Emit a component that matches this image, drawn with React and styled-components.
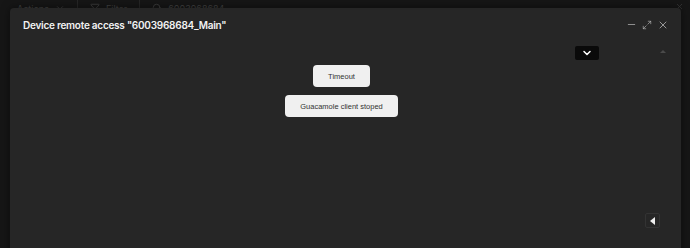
import React from 'react';
import styled, { createGlobalStyle } from 'styled-components';
import { ChevronDown, Filter, Search, Minus, Maximize2, X } from 'lucide-react';

const Global = createGlobalStyle`
    html, body {
        margin: 0;
        padding: 0;
        background: #161616;
        font-family: Inter, "Noto Sans", Arial, sans-serif;
        overflow: hidden;
    }
    #root {
        width: 690px;
        height: 248px;
        position: relative;
        overflow: hidden;
    }
`

const Toolbar = styled.div`
    display: flex;
    align-items: center;
    height: 16px;
    padding: 0 0 0 17px;
    margin-top: 0;
    color: #404040;
    font-size: 9px;
    gap: 12px;
`
const ToolItem = styled.div`
    display: flex;
    align-items: center;
    gap: 6px;
    padding-right: 12px;
    border-right: ${p => p.$sep ? '1px solid #262626' : 'none'};
    height: 16px;
`
const BackClose = styled.div`
    position: absolute;
    top: 2px;
    right: 6px;
    color: #3a3a3a;
    display: flex;
`

const Modal = styled.div`
    position: absolute;
    left: 10px;
    top: 8px;
    width: 671px;
    height: 260px;
    background: #262626;
    border-radius: 4px;
    display: flex;
    flex-direction: column;
    box-shadow: 0 0 8px rgba(0,0,0,0.5);
`
const Header = styled.div`
    display: flex;
    align-items: center;
    justify-content: space-between;
    height: 33px;
    padding: 0 12px 0 13px;
`
const Title = styled.div`
    color: #f2f2f2;
    font-size: 10px;
    font-weight: 600;
    letter-spacing: -0.25px;
`
const HeaderIcons = styled.div`
    display: flex;
    align-items: center;
    gap: 5px;
    color: #bdbdbd;
`
const Body = styled.div`
    position: relative;
    flex: 1;
    display: flex;
    flex-direction: column;
    align-items: center;
    padding: 24px 8px 0 0;
    gap: 8px;
`
const Notice = styled.div`
    background: #f0f0f0;
    color: #333;
    font-family: Arial, "Liberation Sans", sans-serif;
    font-size: 7.5px;
    border-radius: 4px;
    height: 22px;
    padding: 0 ${p => p.$pad}px;
    display: flex;
    align-items: center;
    justify-content: center;
    box-sizing: border-box;
`
const Toggle = styled.div`
    position: absolute;
    top: 5px;
    left: 565px;
    width: 24px;
    height: 14px;
    background: #0a0a0a;
    border-radius: 2px;
    display: flex;
    align-items: center;
    justify-content: center;
    color: #fff;
`
const ScrollUp = styled.div`
    position: absolute;
    top: 9px;
    left: 650px;
    width: 0;
    height: 0;
    border-left: 3px solid transparent;
    border-right: 3px solid transparent;
    border-bottom: 3px solid #4a4a4a;
`
const SideButton = styled.div`
    position: absolute;
    top: 172px;
    left: 635px;
    width: 15px;
    height: 15px;
    border: 1px solid #333;
    border-radius: 2px;
    box-sizing: border-box;
    display: flex;
    align-items: center;
    justify-content: center;
    &::after {
        content: '';
        border-top: 4px solid transparent;
        border-bottom: 4px solid transparent;
        border-right: 5px solid #eee;
    }
`

export default function App() {
    return <>
        <Global />
        <Toolbar>
            <ToolItem $sep>Actions <ChevronDown size={10} /></ToolItem>
            <ToolItem $sep><Filter size={10} /> Filter</ToolItem>
            <ToolItem><Search size={10} /> 6003968684</ToolItem>
        </Toolbar>
        <BackClose><X size={9} /></BackClose>
        <Modal>
            <Header>
                <Title>Device remote access "6003968684_Main"</Title>
                <HeaderIcons>
                    <Minus size={11} strokeWidth={1.5} />
                    <Maximize2 size={10} strokeWidth={1.5} />
                    <X size={12} strokeWidth={1.5} />
                </HeaderIcons>
            </Header>
            <Body>
                <Toggle><ChevronDown size={12} strokeWidth={3} /></Toggle>
                <ScrollUp />
                <Notice $pad={15}>Timeout</Notice>
                <Notice $pad={15}>Guacamole client stoped</Notice>
                <SideButton />
            </Body>
        </Modal>
    </>
}
